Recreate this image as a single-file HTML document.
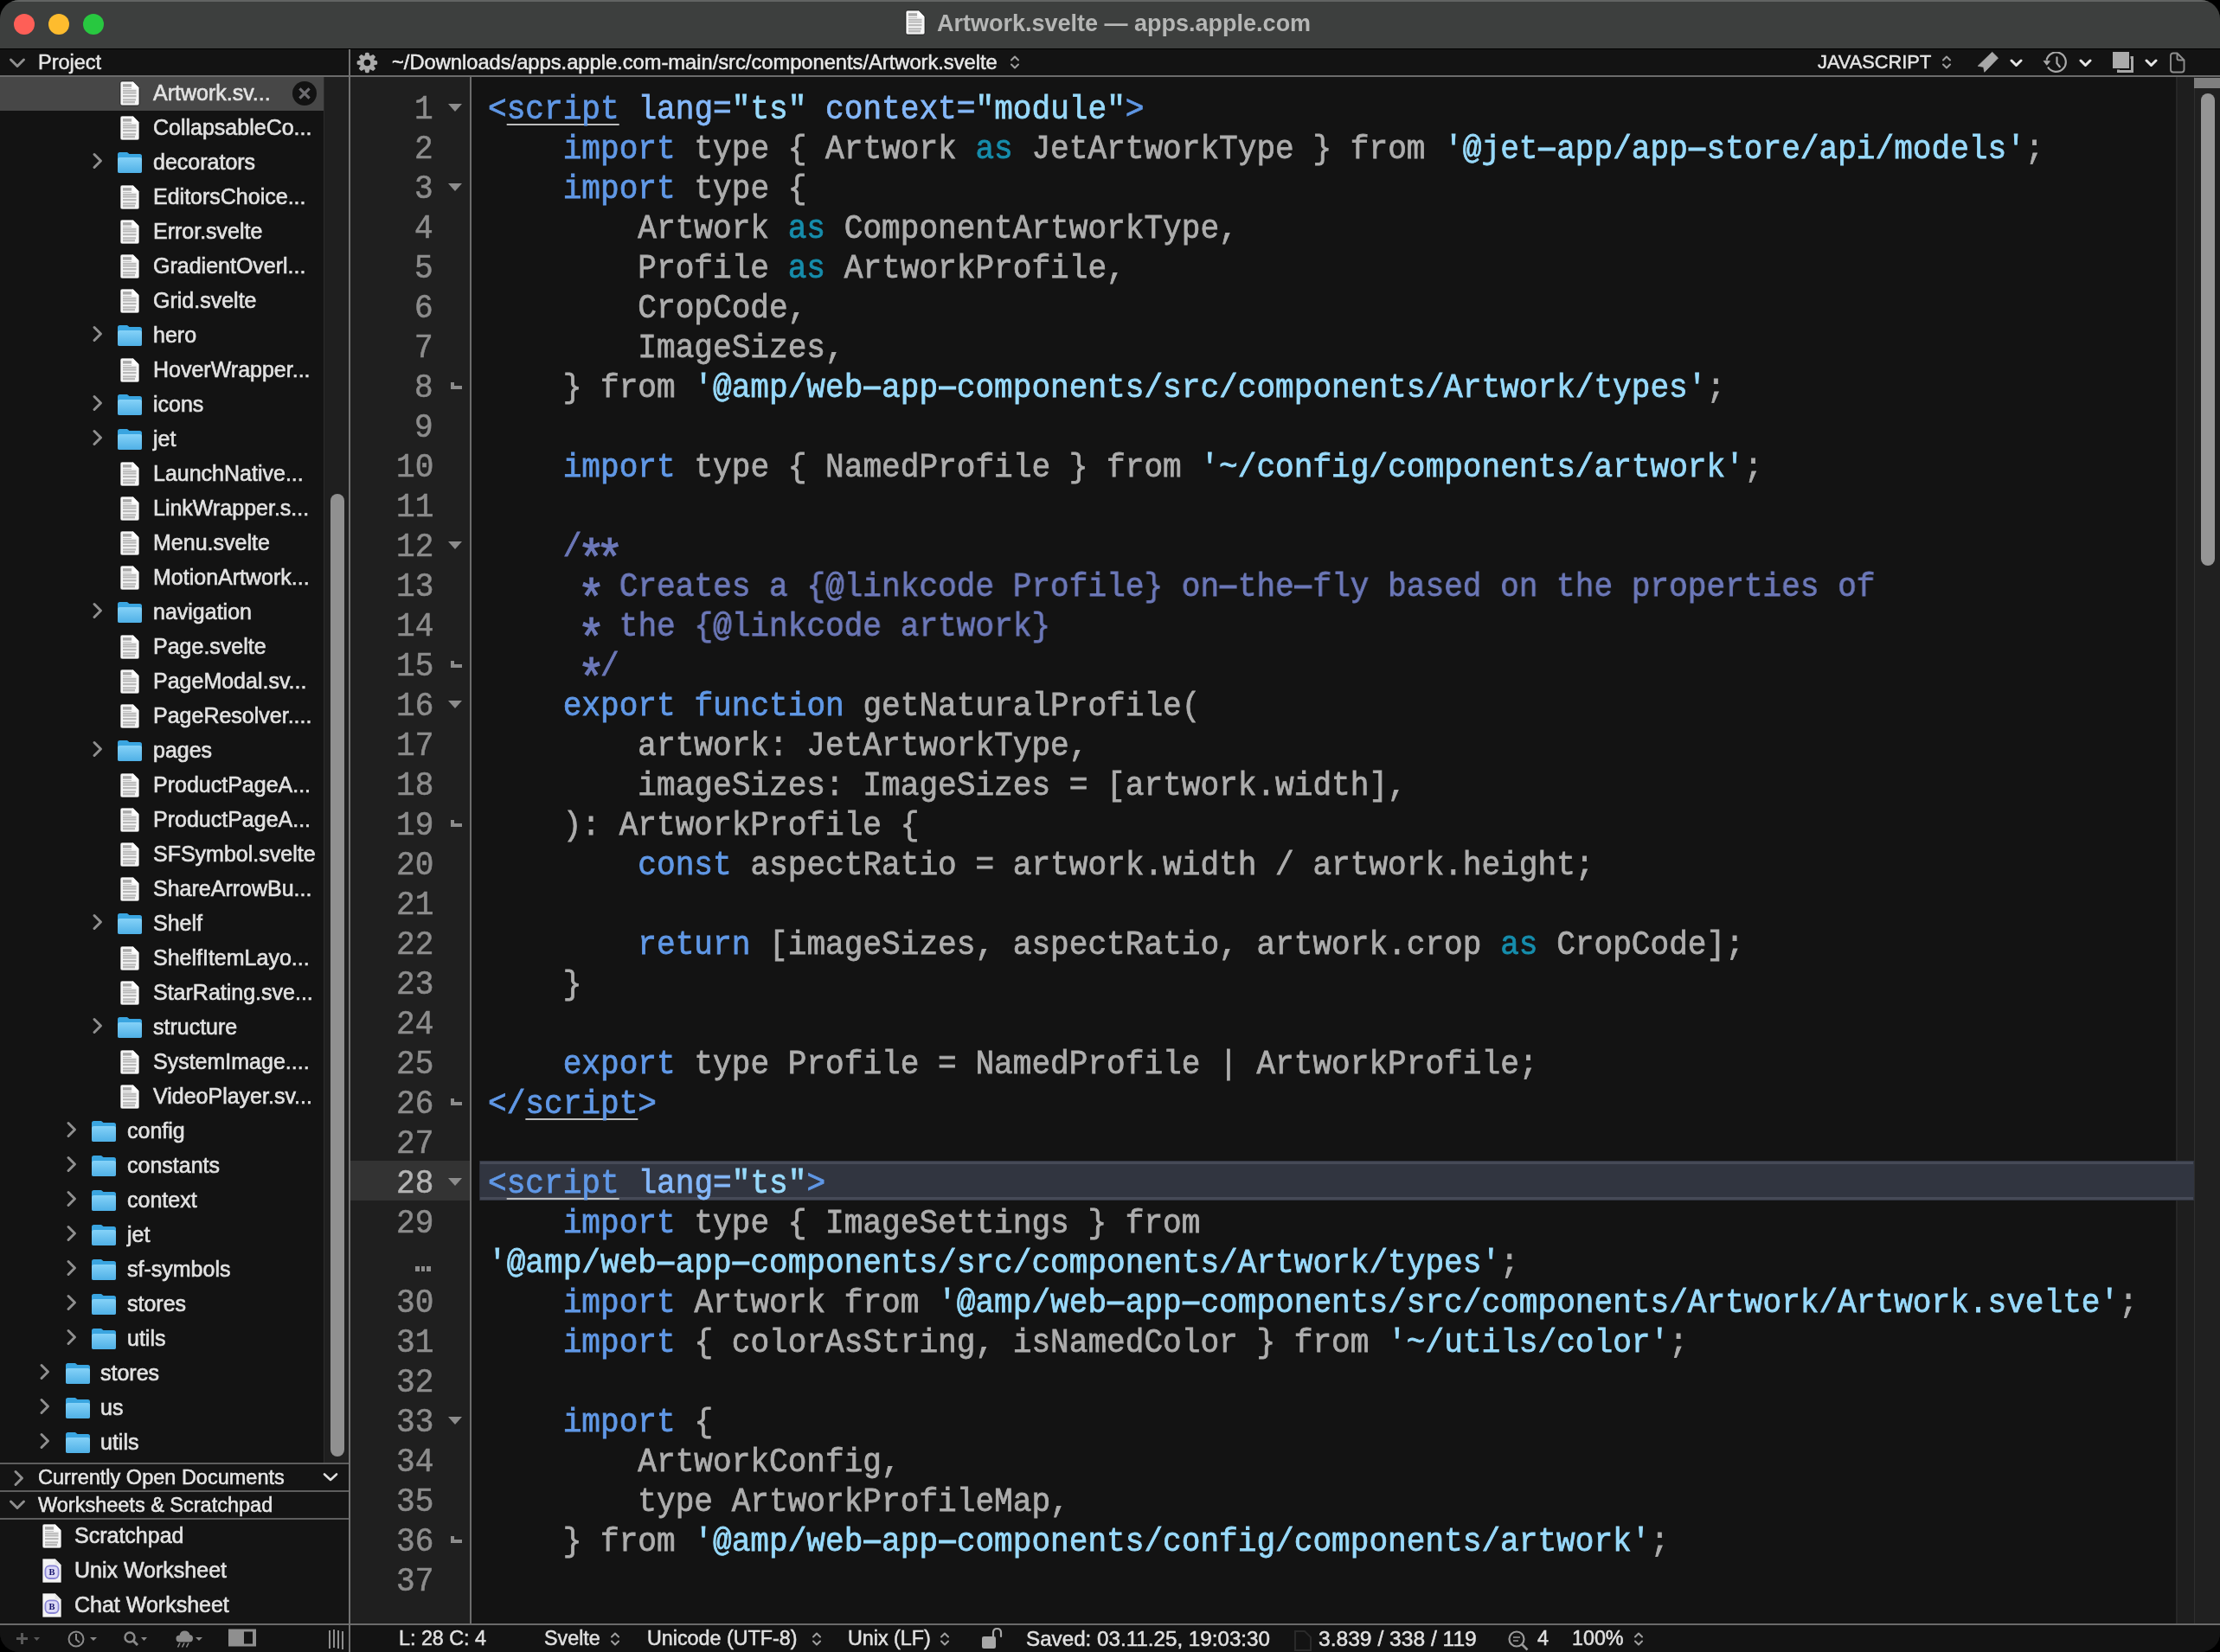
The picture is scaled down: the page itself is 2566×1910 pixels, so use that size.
<!DOCTYPE html><html><head><meta charset="utf-8"><style>
*{margin:0;padding:0;box-sizing:border-box}
html,body{width:2566px;height:1910px;background:#000;overflow:hidden}
body{position:relative;font-family:"Liberation Sans",sans-serif}
.abs{position:absolute}
#win{will-change:transform;position:absolute;left:0;top:0;width:2566px;height:1910px;border-radius:22px;overflow:hidden;background:#141414}
.cl{-webkit-text-stroke-width:0.8px;position:absolute;left:564.0px;height:46px;line-height:46px;font-family:"Liberation Mono",monospace;font-size:39.5px;white-space:pre;transform:scaleX(0.91414);transform-origin:0 0;letter-spacing:0}
.ln{-webkit-text-stroke-width:0.6px;position:absolute;right:2064.9px;height:46px;line-height:46px;font-family:"Liberation Mono",monospace;font-size:39.5px;white-space:pre;color:#8c8c8c;transform:scaleX(0.91414);transform-origin:100% 0}
.ast{display:inline-block;width:0.6em;text-align:center;transform:translateY(17px) scale(1.5)}
.hy{display:inline-block;width:0.6em;text-align:center;transform:scaleX(1.9)}
.u{text-decoration:underline;text-decoration-skip-ink:none;text-decoration-color:#bdbdbd;text-decoration-thickness:2px;text-underline-offset:6px}
.sbt{-webkit-text-stroke:0.6px #e2e2e2;position:absolute;height:40px;line-height:40px;font-size:25px;color:#e2e2e2;white-space:pre}
.st{-webkit-text-stroke:0.5px #e0e0e0;position:absolute;top:1879px;height:31px;line-height:31px;font-size:23.3px;color:#e0e0e0;white-space:pre}
.hd{-webkit-text-stroke:0.5px currentColor;position:absolute;height:30px;line-height:30px;font-size:23.5px;color:#e6e6e6;white-space:pre}
</style></head><body><div id="win">
<div class="abs" style="left:0;top:0;width:2566px;height:56px;background:#3d3f3e;border-top:2px solid #626463"></div>
<div class="abs" style="left:0;top:56px;width:2566px;height:1px;background:#000"></div>
<div class="abs" style="left:16px;top:16px;width:24px;height:24px;border-radius:50%;background:#fe5f57"></div>
<div class="abs" style="left:56px;top:16px;width:24px;height:24px;border-radius:50%;background:#febc2e"></div>
<div class="abs" style="left:96px;top:16px;width:24px;height:24px;border-radius:50%;background:#28c840"></div>
<div class="abs" style="left:1046px;top:11px"><svg width="24" height="30" viewBox="0 0 24 30"><path d="M3 1 H15.6 L23 8.4 V27 Q23 29 21 29 H3 Q1 29 1 27 V3 Q1 1 3 1Z" fill="#f6f6f6" stroke="#0c0c0c" stroke-width="0.7"/><path d="M15.6 1.3 L22.7 8.4 H17 Q15.6 8.4 15.6 7Z" fill="#ffffff"/><g fill="#a9a9a9"><rect x="4" y="4.2" width="10" height="3.4"/></g><g fill="#bababa"><rect x="4" y="9" width="10" height="0.9"/><rect x="4" y="10.8" width="15.5" height="2"/><rect x="4" y="13.4" width="15.5" height="2.2"/><rect x="4" y="17" width="15.5" height="2.3"/><rect x="4" y="21.2" width="15" height="2.2"/><rect x="4" y="24" width="14" height="2.4"/></g></svg></div>
<div class="abs" style="left:1083px;top:0;height:56px;line-height:54px;font-size:27px;font-weight:bold;color:#b5b6b5;white-space:pre">Artwork.svelte — apps.apple.com</div>
<div class="abs" style="left:0;top:57px;width:2566px;height:30px;background:#131313"></div>
<div class="abs" style="left:0;top:87px;width:2566px;height:2px;background:#6b6b6b"></div>
<div class="abs" style="left:10px;top:66px"><svg width="20" height="14" viewBox="0 0 20 14"><path d="M2.5 3 L10 10.5 L17.5 3" fill="none" stroke="#8f8f8f" stroke-width="3" stroke-linecap="round" stroke-linejoin="round"/></svg></div>
<div class="hd" style="left:44px;top:57px">Project</div>
<div class="abs" style="left:411px;top:59px"><svg width="27" height="27" viewBox="0 0 27 27"><g fill="#ababab"><circle cx="13.4" cy="13.5" r="8.4"/><path d="M10.4 6 L11.4 1.9 Q13.4 1.5 15.4 1.9 L16.4 6Z" transform="rotate(0 13.4 13.5)"/><path d="M10.4 6 L11.4 1.9 Q13.4 1.5 15.4 1.9 L16.4 6Z" transform="rotate(45 13.4 13.5)"/><path d="M10.4 6 L11.4 1.9 Q13.4 1.5 15.4 1.9 L16.4 6Z" transform="rotate(90 13.4 13.5)"/><path d="M10.4 6 L11.4 1.9 Q13.4 1.5 15.4 1.9 L16.4 6Z" transform="rotate(135 13.4 13.5)"/><path d="M10.4 6 L11.4 1.9 Q13.4 1.5 15.4 1.9 L16.4 6Z" transform="rotate(180 13.4 13.5)"/><path d="M10.4 6 L11.4 1.9 Q13.4 1.5 15.4 1.9 L16.4 6Z" transform="rotate(225 13.4 13.5)"/><path d="M10.4 6 L11.4 1.9 Q13.4 1.5 15.4 1.9 L16.4 6Z" transform="rotate(270 13.4 13.5)"/><path d="M10.4 6 L11.4 1.9 Q13.4 1.5 15.4 1.9 L16.4 6Z" transform="rotate(315 13.4 13.5)"/></g><circle cx="13.4" cy="13.5" r="3.8" fill="#131313"/></svg></div>
<div class="hd" style="left:453px;top:57px;font-size:23.7px;color:#e8e8e8">~/Downloads/apps.apple.com-main/src/components/Artwork.svelte</div>
<div class="abs" style="left:1167px;top:63px"><svg width="12" height="18" viewBox="0 0 12 18"><path d="M2 6.5 L6 2.5 L10 6.5 M2 11.5 L6 15.5 L10 11.5" fill="none" stroke="#a0a0a0" stroke-width="2" stroke-linecap="round" stroke-linejoin="round"/></svg></div>
<div class="hd" style="left:2101px;top:57px;font-size:21.8px;color:#e4e4e4">JAVASCRIPT</div>
<div class="abs" style="left:2244px;top:63px"><svg width="12" height="18" viewBox="0 0 12 18"><path d="M2 6.5 L6 2.5 L10 6.5 M2 11.5 L6 15.5 L10 11.5" fill="none" stroke="#a0a0a0" stroke-width="2" stroke-linecap="round" stroke-linejoin="round"/></svg></div>
<div class="abs" style="left:2284px;top:59px"><svg width="28" height="28" viewBox="0 0 28 28"><path d="M18.7 1.3 L25.5 8.1 L9.8 24.3 L8.7 18.4 L2.2 17.3 Z" fill="#a8a8a8" stroke="#a8a8a8" stroke-width="0.8" stroke-linejoin="round"/></svg></div>
<div class="abs" style="left:2322.5px;top:67.5px"><svg width="18" height="14" viewBox="0 0 18 14"><path d="M2 2 L7.5 7.5 L13 2" fill="none" stroke="#e6e6e6" stroke-width="3" stroke-linecap="round" stroke-linejoin="round"/></svg></div>
<div class="abs" style="left:2361px;top:60px"><svg width="30" height="26" viewBox="0 0 30 26"><path d="M6 17.5 A11.2 11.2 0 1 0 4.6 9.6" fill="none" stroke="#a9a9a9" stroke-width="2.2"/><path d="M1.1 10.4 L8.5 10.7 L4.8 15.3Z" fill="#a9a9a9" stroke="#a9a9a9" stroke-width="0.8" stroke-linejoin="round"/><path d="M16.5 6.4 V13.2 L19.8 17.2" fill="none" stroke="#a9a9a9" stroke-width="2.2" stroke-linecap="round"/></svg></div>
<div class="abs" style="left:2402.5px;top:67.5px"><svg width="18" height="14" viewBox="0 0 18 14"><path d="M2 2 L7.5 7.5 L13 2" fill="none" stroke="#e6e6e6" stroke-width="3" stroke-linecap="round" stroke-linejoin="round"/></svg></div>
<div class="abs" style="left:2441px;top:59px"><svg width="28" height="28" viewBox="0 0 28 28"><rect x="7.5" y="7.5" width="16" height="16" fill="none" stroke="#a8a8a8" stroke-width="3"/><rect x="0" y="0" width="21.5" height="21.5" fill="#131313"/><rect x="1" y="1" width="19" height="19" fill="#ababab"/></svg></div>
<div class="abs" style="left:2478.5px;top:67.5px"><svg width="18" height="14" viewBox="0 0 18 14"><path d="M2 2 L7.5 7.5 L13 2" fill="none" stroke="#e6e6e6" stroke-width="3" stroke-linecap="round" stroke-linejoin="round"/></svg></div>
<div class="abs" style="left:2507px;top:60px"><svg width="20" height="26" viewBox="0 0 20 26"><path d="M4.5 1.5 H9.5 L17.5 9.5 V20.5 Q17.5 23.5 14.5 23.5 H5 Q2 23.5 2 20.5 V4.5 Q2 1.5 5 1.5Z M9.5 1.5 V7.5 Q9.5 9.5 11.5 9.5 H17.5" fill="none" stroke="#8e8e8e" stroke-width="1.9" stroke-linejoin="round"/></svg></div>
<div class="abs" style="left:0;top:89px;width:403px;height:1602px;background:#131313"></div>
<div class="abs" style="left:0;top:88px;width:374px;height:40px;background:#474747"></div>
<div class="abs" style="left:374px;top:89px;width:29px;height:1602px;background:#1f1f1f;border-left:1px solid #2c2c2c"></div>
<div class="abs" style="left:382px;top:571px;width:16px;height:1113px;border-radius:8px;background:#909090"></div>
<div class="abs" style="left:0;top:87px;width:403px;height:1.5px;background:#6b6b6b"></div>
<div class="abs" style="left:138px;top:93px"><svg width="24" height="30" viewBox="0 0 24 30"><path d="M3 1 H15.6 L23 8.4 V27 Q23 29 21 29 H3 Q1 29 1 27 V3 Q1 1 3 1Z" fill="#f6f6f6" stroke="#0c0c0c" stroke-width="0.7"/><path d="M15.6 1.3 L22.7 8.4 H17 Q15.6 8.4 15.6 7Z" fill="#ffffff"/><g fill="#a9a9a9"><rect x="4" y="4.2" width="10" height="3.4"/></g><g fill="#bababa"><rect x="4" y="9" width="10" height="0.9"/><rect x="4" y="10.8" width="15.5" height="2"/><rect x="4" y="13.4" width="15.5" height="2.2"/><rect x="4" y="17" width="15.5" height="2.3"/><rect x="4" y="21.2" width="15" height="2.2"/><rect x="4" y="24" width="14" height="2.4"/></g></svg></div>
<div class="sbt" style="left:177px;top:87px">Artwork.sv...</div>
<div class="abs" style="left:138px;top:133px"><svg width="24" height="30" viewBox="0 0 24 30"><path d="M3 1 H15.6 L23 8.4 V27 Q23 29 21 29 H3 Q1 29 1 27 V3 Q1 1 3 1Z" fill="#f6f6f6" stroke="#0c0c0c" stroke-width="0.7"/><path d="M15.6 1.3 L22.7 8.4 H17 Q15.6 8.4 15.6 7Z" fill="#ffffff"/><g fill="#a9a9a9"><rect x="4" y="4.2" width="10" height="3.4"/></g><g fill="#bababa"><rect x="4" y="9" width="10" height="0.9"/><rect x="4" y="10.8" width="15.5" height="2"/><rect x="4" y="13.4" width="15.5" height="2.2"/><rect x="4" y="17" width="15.5" height="2.3"/><rect x="4" y="21.2" width="15" height="2.2"/><rect x="4" y="24" width="14" height="2.4"/></g></svg></div>
<div class="sbt" style="left:177px;top:127px">CollapsableCo...</div>
<div class="abs" style="left:106px;top:176px"><svg width="14" height="20" viewBox="0 0 14 20"><path d="M3 2.5 L10.5 10 L3 17.5" fill="none" stroke="#8f8f8f" stroke-width="3" stroke-linecap="round" stroke-linejoin="round"/></svg></div>
<div class="abs" style="left:135px;top:175px"><svg width="30" height="26" viewBox="0 0 30 26"><defs><linearGradient id="fg1" x1="0" y1="0" x2="0" y2="1"><stop offset="0" stop-color="#85d2f8"/><stop offset="1" stop-color="#4fb0e6"/></linearGradient></defs><path d="M1 3.5 Q1 1 3.5 1 H12 L14.5 3 H26.5 Q29 3 29 5.5 V22.5 Q29 25 26.5 25 H3.5 Q1 25 1 22.5Z" fill="#3aa5e0"/><path d="M1 9.5 Q1 7 3.5 7 H26.5 Q29 7 29 9.5 V22.5 Q29 25 26.5 25 H3.5 Q1 25 1 22.5Z" fill="url(#fg1)"/></svg></div>
<div class="sbt" style="left:177px;top:167px">decorators</div>
<div class="abs" style="left:138px;top:213px"><svg width="24" height="30" viewBox="0 0 24 30"><path d="M3 1 H15.6 L23 8.4 V27 Q23 29 21 29 H3 Q1 29 1 27 V3 Q1 1 3 1Z" fill="#f6f6f6" stroke="#0c0c0c" stroke-width="0.7"/><path d="M15.6 1.3 L22.7 8.4 H17 Q15.6 8.4 15.6 7Z" fill="#ffffff"/><g fill="#a9a9a9"><rect x="4" y="4.2" width="10" height="3.4"/></g><g fill="#bababa"><rect x="4" y="9" width="10" height="0.9"/><rect x="4" y="10.8" width="15.5" height="2"/><rect x="4" y="13.4" width="15.5" height="2.2"/><rect x="4" y="17" width="15.5" height="2.3"/><rect x="4" y="21.2" width="15" height="2.2"/><rect x="4" y="24" width="14" height="2.4"/></g></svg></div>
<div class="sbt" style="left:177px;top:207px">EditorsChoice...</div>
<div class="abs" style="left:138px;top:253px"><svg width="24" height="30" viewBox="0 0 24 30"><path d="M3 1 H15.6 L23 8.4 V27 Q23 29 21 29 H3 Q1 29 1 27 V3 Q1 1 3 1Z" fill="#f6f6f6" stroke="#0c0c0c" stroke-width="0.7"/><path d="M15.6 1.3 L22.7 8.4 H17 Q15.6 8.4 15.6 7Z" fill="#ffffff"/><g fill="#a9a9a9"><rect x="4" y="4.2" width="10" height="3.4"/></g><g fill="#bababa"><rect x="4" y="9" width="10" height="0.9"/><rect x="4" y="10.8" width="15.5" height="2"/><rect x="4" y="13.4" width="15.5" height="2.2"/><rect x="4" y="17" width="15.5" height="2.3"/><rect x="4" y="21.2" width="15" height="2.2"/><rect x="4" y="24" width="14" height="2.4"/></g></svg></div>
<div class="sbt" style="left:177px;top:247px">Error.svelte</div>
<div class="abs" style="left:138px;top:293px"><svg width="24" height="30" viewBox="0 0 24 30"><path d="M3 1 H15.6 L23 8.4 V27 Q23 29 21 29 H3 Q1 29 1 27 V3 Q1 1 3 1Z" fill="#f6f6f6" stroke="#0c0c0c" stroke-width="0.7"/><path d="M15.6 1.3 L22.7 8.4 H17 Q15.6 8.4 15.6 7Z" fill="#ffffff"/><g fill="#a9a9a9"><rect x="4" y="4.2" width="10" height="3.4"/></g><g fill="#bababa"><rect x="4" y="9" width="10" height="0.9"/><rect x="4" y="10.8" width="15.5" height="2"/><rect x="4" y="13.4" width="15.5" height="2.2"/><rect x="4" y="17" width="15.5" height="2.3"/><rect x="4" y="21.2" width="15" height="2.2"/><rect x="4" y="24" width="14" height="2.4"/></g></svg></div>
<div class="sbt" style="left:177px;top:287px">GradientOverl...</div>
<div class="abs" style="left:138px;top:333px"><svg width="24" height="30" viewBox="0 0 24 30"><path d="M3 1 H15.6 L23 8.4 V27 Q23 29 21 29 H3 Q1 29 1 27 V3 Q1 1 3 1Z" fill="#f6f6f6" stroke="#0c0c0c" stroke-width="0.7"/><path d="M15.6 1.3 L22.7 8.4 H17 Q15.6 8.4 15.6 7Z" fill="#ffffff"/><g fill="#a9a9a9"><rect x="4" y="4.2" width="10" height="3.4"/></g><g fill="#bababa"><rect x="4" y="9" width="10" height="0.9"/><rect x="4" y="10.8" width="15.5" height="2"/><rect x="4" y="13.4" width="15.5" height="2.2"/><rect x="4" y="17" width="15.5" height="2.3"/><rect x="4" y="21.2" width="15" height="2.2"/><rect x="4" y="24" width="14" height="2.4"/></g></svg></div>
<div class="sbt" style="left:177px;top:327px">Grid.svelte</div>
<div class="abs" style="left:106px;top:376px"><svg width="14" height="20" viewBox="0 0 14 20"><path d="M3 2.5 L10.5 10 L3 17.5" fill="none" stroke="#8f8f8f" stroke-width="3" stroke-linecap="round" stroke-linejoin="round"/></svg></div>
<div class="abs" style="left:135px;top:375px"><svg width="30" height="26" viewBox="0 0 30 26"><defs><linearGradient id="fg2" x1="0" y1="0" x2="0" y2="1"><stop offset="0" stop-color="#85d2f8"/><stop offset="1" stop-color="#4fb0e6"/></linearGradient></defs><path d="M1 3.5 Q1 1 3.5 1 H12 L14.5 3 H26.5 Q29 3 29 5.5 V22.5 Q29 25 26.5 25 H3.5 Q1 25 1 22.5Z" fill="#3aa5e0"/><path d="M1 9.5 Q1 7 3.5 7 H26.5 Q29 7 29 9.5 V22.5 Q29 25 26.5 25 H3.5 Q1 25 1 22.5Z" fill="url(#fg2)"/></svg></div>
<div class="sbt" style="left:177px;top:367px">hero</div>
<div class="abs" style="left:138px;top:413px"><svg width="24" height="30" viewBox="0 0 24 30"><path d="M3 1 H15.6 L23 8.4 V27 Q23 29 21 29 H3 Q1 29 1 27 V3 Q1 1 3 1Z" fill="#f6f6f6" stroke="#0c0c0c" stroke-width="0.7"/><path d="M15.6 1.3 L22.7 8.4 H17 Q15.6 8.4 15.6 7Z" fill="#ffffff"/><g fill="#a9a9a9"><rect x="4" y="4.2" width="10" height="3.4"/></g><g fill="#bababa"><rect x="4" y="9" width="10" height="0.9"/><rect x="4" y="10.8" width="15.5" height="2"/><rect x="4" y="13.4" width="15.5" height="2.2"/><rect x="4" y="17" width="15.5" height="2.3"/><rect x="4" y="21.2" width="15" height="2.2"/><rect x="4" y="24" width="14" height="2.4"/></g></svg></div>
<div class="sbt" style="left:177px;top:407px">HoverWrapper...</div>
<div class="abs" style="left:106px;top:456px"><svg width="14" height="20" viewBox="0 0 14 20"><path d="M3 2.5 L10.5 10 L3 17.5" fill="none" stroke="#8f8f8f" stroke-width="3" stroke-linecap="round" stroke-linejoin="round"/></svg></div>
<div class="abs" style="left:135px;top:455px"><svg width="30" height="26" viewBox="0 0 30 26"><defs><linearGradient id="fg3" x1="0" y1="0" x2="0" y2="1"><stop offset="0" stop-color="#85d2f8"/><stop offset="1" stop-color="#4fb0e6"/></linearGradient></defs><path d="M1 3.5 Q1 1 3.5 1 H12 L14.5 3 H26.5 Q29 3 29 5.5 V22.5 Q29 25 26.5 25 H3.5 Q1 25 1 22.5Z" fill="#3aa5e0"/><path d="M1 9.5 Q1 7 3.5 7 H26.5 Q29 7 29 9.5 V22.5 Q29 25 26.5 25 H3.5 Q1 25 1 22.5Z" fill="url(#fg3)"/></svg></div>
<div class="sbt" style="left:177px;top:447px">icons</div>
<div class="abs" style="left:106px;top:496px"><svg width="14" height="20" viewBox="0 0 14 20"><path d="M3 2.5 L10.5 10 L3 17.5" fill="none" stroke="#8f8f8f" stroke-width="3" stroke-linecap="round" stroke-linejoin="round"/></svg></div>
<div class="abs" style="left:135px;top:495px"><svg width="30" height="26" viewBox="0 0 30 26"><defs><linearGradient id="fg4" x1="0" y1="0" x2="0" y2="1"><stop offset="0" stop-color="#85d2f8"/><stop offset="1" stop-color="#4fb0e6"/></linearGradient></defs><path d="M1 3.5 Q1 1 3.5 1 H12 L14.5 3 H26.5 Q29 3 29 5.5 V22.5 Q29 25 26.5 25 H3.5 Q1 25 1 22.5Z" fill="#3aa5e0"/><path d="M1 9.5 Q1 7 3.5 7 H26.5 Q29 7 29 9.5 V22.5 Q29 25 26.5 25 H3.5 Q1 25 1 22.5Z" fill="url(#fg4)"/></svg></div>
<div class="sbt" style="left:177px;top:487px">jet</div>
<div class="abs" style="left:138px;top:533px"><svg width="24" height="30" viewBox="0 0 24 30"><path d="M3 1 H15.6 L23 8.4 V27 Q23 29 21 29 H3 Q1 29 1 27 V3 Q1 1 3 1Z" fill="#f6f6f6" stroke="#0c0c0c" stroke-width="0.7"/><path d="M15.6 1.3 L22.7 8.4 H17 Q15.6 8.4 15.6 7Z" fill="#ffffff"/><g fill="#a9a9a9"><rect x="4" y="4.2" width="10" height="3.4"/></g><g fill="#bababa"><rect x="4" y="9" width="10" height="0.9"/><rect x="4" y="10.8" width="15.5" height="2"/><rect x="4" y="13.4" width="15.5" height="2.2"/><rect x="4" y="17" width="15.5" height="2.3"/><rect x="4" y="21.2" width="15" height="2.2"/><rect x="4" y="24" width="14" height="2.4"/></g></svg></div>
<div class="sbt" style="left:177px;top:527px">LaunchNative...</div>
<div class="abs" style="left:138px;top:573px"><svg width="24" height="30" viewBox="0 0 24 30"><path d="M3 1 H15.6 L23 8.4 V27 Q23 29 21 29 H3 Q1 29 1 27 V3 Q1 1 3 1Z" fill="#f6f6f6" stroke="#0c0c0c" stroke-width="0.7"/><path d="M15.6 1.3 L22.7 8.4 H17 Q15.6 8.4 15.6 7Z" fill="#ffffff"/><g fill="#a9a9a9"><rect x="4" y="4.2" width="10" height="3.4"/></g><g fill="#bababa"><rect x="4" y="9" width="10" height="0.9"/><rect x="4" y="10.8" width="15.5" height="2"/><rect x="4" y="13.4" width="15.5" height="2.2"/><rect x="4" y="17" width="15.5" height="2.3"/><rect x="4" y="21.2" width="15" height="2.2"/><rect x="4" y="24" width="14" height="2.4"/></g></svg></div>
<div class="sbt" style="left:177px;top:567px">LinkWrapper.s...</div>
<div class="abs" style="left:138px;top:613px"><svg width="24" height="30" viewBox="0 0 24 30"><path d="M3 1 H15.6 L23 8.4 V27 Q23 29 21 29 H3 Q1 29 1 27 V3 Q1 1 3 1Z" fill="#f6f6f6" stroke="#0c0c0c" stroke-width="0.7"/><path d="M15.6 1.3 L22.7 8.4 H17 Q15.6 8.4 15.6 7Z" fill="#ffffff"/><g fill="#a9a9a9"><rect x="4" y="4.2" width="10" height="3.4"/></g><g fill="#bababa"><rect x="4" y="9" width="10" height="0.9"/><rect x="4" y="10.8" width="15.5" height="2"/><rect x="4" y="13.4" width="15.5" height="2.2"/><rect x="4" y="17" width="15.5" height="2.3"/><rect x="4" y="21.2" width="15" height="2.2"/><rect x="4" y="24" width="14" height="2.4"/></g></svg></div>
<div class="sbt" style="left:177px;top:607px">Menu.svelte</div>
<div class="abs" style="left:138px;top:653px"><svg width="24" height="30" viewBox="0 0 24 30"><path d="M3 1 H15.6 L23 8.4 V27 Q23 29 21 29 H3 Q1 29 1 27 V3 Q1 1 3 1Z" fill="#f6f6f6" stroke="#0c0c0c" stroke-width="0.7"/><path d="M15.6 1.3 L22.7 8.4 H17 Q15.6 8.4 15.6 7Z" fill="#ffffff"/><g fill="#a9a9a9"><rect x="4" y="4.2" width="10" height="3.4"/></g><g fill="#bababa"><rect x="4" y="9" width="10" height="0.9"/><rect x="4" y="10.8" width="15.5" height="2"/><rect x="4" y="13.4" width="15.5" height="2.2"/><rect x="4" y="17" width="15.5" height="2.3"/><rect x="4" y="21.2" width="15" height="2.2"/><rect x="4" y="24" width="14" height="2.4"/></g></svg></div>
<div class="sbt" style="left:177px;top:647px">MotionArtwork...</div>
<div class="abs" style="left:106px;top:696px"><svg width="14" height="20" viewBox="0 0 14 20"><path d="M3 2.5 L10.5 10 L3 17.5" fill="none" stroke="#8f8f8f" stroke-width="3" stroke-linecap="round" stroke-linejoin="round"/></svg></div>
<div class="abs" style="left:135px;top:695px"><svg width="30" height="26" viewBox="0 0 30 26"><defs><linearGradient id="fg5" x1="0" y1="0" x2="0" y2="1"><stop offset="0" stop-color="#85d2f8"/><stop offset="1" stop-color="#4fb0e6"/></linearGradient></defs><path d="M1 3.5 Q1 1 3.5 1 H12 L14.5 3 H26.5 Q29 3 29 5.5 V22.5 Q29 25 26.5 25 H3.5 Q1 25 1 22.5Z" fill="#3aa5e0"/><path d="M1 9.5 Q1 7 3.5 7 H26.5 Q29 7 29 9.5 V22.5 Q29 25 26.5 25 H3.5 Q1 25 1 22.5Z" fill="url(#fg5)"/></svg></div>
<div class="sbt" style="left:177px;top:687px">navigation</div>
<div class="abs" style="left:138px;top:733px"><svg width="24" height="30" viewBox="0 0 24 30"><path d="M3 1 H15.6 L23 8.4 V27 Q23 29 21 29 H3 Q1 29 1 27 V3 Q1 1 3 1Z" fill="#f6f6f6" stroke="#0c0c0c" stroke-width="0.7"/><path d="M15.6 1.3 L22.7 8.4 H17 Q15.6 8.4 15.6 7Z" fill="#ffffff"/><g fill="#a9a9a9"><rect x="4" y="4.2" width="10" height="3.4"/></g><g fill="#bababa"><rect x="4" y="9" width="10" height="0.9"/><rect x="4" y="10.8" width="15.5" height="2"/><rect x="4" y="13.4" width="15.5" height="2.2"/><rect x="4" y="17" width="15.5" height="2.3"/><rect x="4" y="21.2" width="15" height="2.2"/><rect x="4" y="24" width="14" height="2.4"/></g></svg></div>
<div class="sbt" style="left:177px;top:727px">Page.svelte</div>
<div class="abs" style="left:138px;top:773px"><svg width="24" height="30" viewBox="0 0 24 30"><path d="M3 1 H15.6 L23 8.4 V27 Q23 29 21 29 H3 Q1 29 1 27 V3 Q1 1 3 1Z" fill="#f6f6f6" stroke="#0c0c0c" stroke-width="0.7"/><path d="M15.6 1.3 L22.7 8.4 H17 Q15.6 8.4 15.6 7Z" fill="#ffffff"/><g fill="#a9a9a9"><rect x="4" y="4.2" width="10" height="3.4"/></g><g fill="#bababa"><rect x="4" y="9" width="10" height="0.9"/><rect x="4" y="10.8" width="15.5" height="2"/><rect x="4" y="13.4" width="15.5" height="2.2"/><rect x="4" y="17" width="15.5" height="2.3"/><rect x="4" y="21.2" width="15" height="2.2"/><rect x="4" y="24" width="14" height="2.4"/></g></svg></div>
<div class="sbt" style="left:177px;top:767px">PageModal.sv...</div>
<div class="abs" style="left:138px;top:813px"><svg width="24" height="30" viewBox="0 0 24 30"><path d="M3 1 H15.6 L23 8.4 V27 Q23 29 21 29 H3 Q1 29 1 27 V3 Q1 1 3 1Z" fill="#f6f6f6" stroke="#0c0c0c" stroke-width="0.7"/><path d="M15.6 1.3 L22.7 8.4 H17 Q15.6 8.4 15.6 7Z" fill="#ffffff"/><g fill="#a9a9a9"><rect x="4" y="4.2" width="10" height="3.4"/></g><g fill="#bababa"><rect x="4" y="9" width="10" height="0.9"/><rect x="4" y="10.8" width="15.5" height="2"/><rect x="4" y="13.4" width="15.5" height="2.2"/><rect x="4" y="17" width="15.5" height="2.3"/><rect x="4" y="21.2" width="15" height="2.2"/><rect x="4" y="24" width="14" height="2.4"/></g></svg></div>
<div class="sbt" style="left:177px;top:807px">PageResolver....</div>
<div class="abs" style="left:106px;top:856px"><svg width="14" height="20" viewBox="0 0 14 20"><path d="M3 2.5 L10.5 10 L3 17.5" fill="none" stroke="#8f8f8f" stroke-width="3" stroke-linecap="round" stroke-linejoin="round"/></svg></div>
<div class="abs" style="left:135px;top:855px"><svg width="30" height="26" viewBox="0 0 30 26"><defs><linearGradient id="fg6" x1="0" y1="0" x2="0" y2="1"><stop offset="0" stop-color="#85d2f8"/><stop offset="1" stop-color="#4fb0e6"/></linearGradient></defs><path d="M1 3.5 Q1 1 3.5 1 H12 L14.5 3 H26.5 Q29 3 29 5.5 V22.5 Q29 25 26.5 25 H3.5 Q1 25 1 22.5Z" fill="#3aa5e0"/><path d="M1 9.5 Q1 7 3.5 7 H26.5 Q29 7 29 9.5 V22.5 Q29 25 26.5 25 H3.5 Q1 25 1 22.5Z" fill="url(#fg6)"/></svg></div>
<div class="sbt" style="left:177px;top:847px">pages</div>
<div class="abs" style="left:138px;top:893px"><svg width="24" height="30" viewBox="0 0 24 30"><path d="M3 1 H15.6 L23 8.4 V27 Q23 29 21 29 H3 Q1 29 1 27 V3 Q1 1 3 1Z" fill="#f6f6f6" stroke="#0c0c0c" stroke-width="0.7"/><path d="M15.6 1.3 L22.7 8.4 H17 Q15.6 8.4 15.6 7Z" fill="#ffffff"/><g fill="#a9a9a9"><rect x="4" y="4.2" width="10" height="3.4"/></g><g fill="#bababa"><rect x="4" y="9" width="10" height="0.9"/><rect x="4" y="10.8" width="15.5" height="2"/><rect x="4" y="13.4" width="15.5" height="2.2"/><rect x="4" y="17" width="15.5" height="2.3"/><rect x="4" y="21.2" width="15" height="2.2"/><rect x="4" y="24" width="14" height="2.4"/></g></svg></div>
<div class="sbt" style="left:177px;top:887px">ProductPageA...</div>
<div class="abs" style="left:138px;top:933px"><svg width="24" height="30" viewBox="0 0 24 30"><path d="M3 1 H15.6 L23 8.4 V27 Q23 29 21 29 H3 Q1 29 1 27 V3 Q1 1 3 1Z" fill="#f6f6f6" stroke="#0c0c0c" stroke-width="0.7"/><path d="M15.6 1.3 L22.7 8.4 H17 Q15.6 8.4 15.6 7Z" fill="#ffffff"/><g fill="#a9a9a9"><rect x="4" y="4.2" width="10" height="3.4"/></g><g fill="#bababa"><rect x="4" y="9" width="10" height="0.9"/><rect x="4" y="10.8" width="15.5" height="2"/><rect x="4" y="13.4" width="15.5" height="2.2"/><rect x="4" y="17" width="15.5" height="2.3"/><rect x="4" y="21.2" width="15" height="2.2"/><rect x="4" y="24" width="14" height="2.4"/></g></svg></div>
<div class="sbt" style="left:177px;top:927px">ProductPageA...</div>
<div class="abs" style="left:138px;top:973px"><svg width="24" height="30" viewBox="0 0 24 30"><path d="M3 1 H15.6 L23 8.4 V27 Q23 29 21 29 H3 Q1 29 1 27 V3 Q1 1 3 1Z" fill="#f6f6f6" stroke="#0c0c0c" stroke-width="0.7"/><path d="M15.6 1.3 L22.7 8.4 H17 Q15.6 8.4 15.6 7Z" fill="#ffffff"/><g fill="#a9a9a9"><rect x="4" y="4.2" width="10" height="3.4"/></g><g fill="#bababa"><rect x="4" y="9" width="10" height="0.9"/><rect x="4" y="10.8" width="15.5" height="2"/><rect x="4" y="13.4" width="15.5" height="2.2"/><rect x="4" y="17" width="15.5" height="2.3"/><rect x="4" y="21.2" width="15" height="2.2"/><rect x="4" y="24" width="14" height="2.4"/></g></svg></div>
<div class="sbt" style="left:177px;top:967px">SFSymbol.svelte</div>
<div class="abs" style="left:138px;top:1013px"><svg width="24" height="30" viewBox="0 0 24 30"><path d="M3 1 H15.6 L23 8.4 V27 Q23 29 21 29 H3 Q1 29 1 27 V3 Q1 1 3 1Z" fill="#f6f6f6" stroke="#0c0c0c" stroke-width="0.7"/><path d="M15.6 1.3 L22.7 8.4 H17 Q15.6 8.4 15.6 7Z" fill="#ffffff"/><g fill="#a9a9a9"><rect x="4" y="4.2" width="10" height="3.4"/></g><g fill="#bababa"><rect x="4" y="9" width="10" height="0.9"/><rect x="4" y="10.8" width="15.5" height="2"/><rect x="4" y="13.4" width="15.5" height="2.2"/><rect x="4" y="17" width="15.5" height="2.3"/><rect x="4" y="21.2" width="15" height="2.2"/><rect x="4" y="24" width="14" height="2.4"/></g></svg></div>
<div class="sbt" style="left:177px;top:1007px">ShareArrowBu...</div>
<div class="abs" style="left:106px;top:1056px"><svg width="14" height="20" viewBox="0 0 14 20"><path d="M3 2.5 L10.5 10 L3 17.5" fill="none" stroke="#8f8f8f" stroke-width="3" stroke-linecap="round" stroke-linejoin="round"/></svg></div>
<div class="abs" style="left:135px;top:1055px"><svg width="30" height="26" viewBox="0 0 30 26"><defs><linearGradient id="fg7" x1="0" y1="0" x2="0" y2="1"><stop offset="0" stop-color="#85d2f8"/><stop offset="1" stop-color="#4fb0e6"/></linearGradient></defs><path d="M1 3.5 Q1 1 3.5 1 H12 L14.5 3 H26.5 Q29 3 29 5.5 V22.5 Q29 25 26.5 25 H3.5 Q1 25 1 22.5Z" fill="#3aa5e0"/><path d="M1 9.5 Q1 7 3.5 7 H26.5 Q29 7 29 9.5 V22.5 Q29 25 26.5 25 H3.5 Q1 25 1 22.5Z" fill="url(#fg7)"/></svg></div>
<div class="sbt" style="left:177px;top:1047px">Shelf</div>
<div class="abs" style="left:138px;top:1093px"><svg width="24" height="30" viewBox="0 0 24 30"><path d="M3 1 H15.6 L23 8.4 V27 Q23 29 21 29 H3 Q1 29 1 27 V3 Q1 1 3 1Z" fill="#f6f6f6" stroke="#0c0c0c" stroke-width="0.7"/><path d="M15.6 1.3 L22.7 8.4 H17 Q15.6 8.4 15.6 7Z" fill="#ffffff"/><g fill="#a9a9a9"><rect x="4" y="4.2" width="10" height="3.4"/></g><g fill="#bababa"><rect x="4" y="9" width="10" height="0.9"/><rect x="4" y="10.8" width="15.5" height="2"/><rect x="4" y="13.4" width="15.5" height="2.2"/><rect x="4" y="17" width="15.5" height="2.3"/><rect x="4" y="21.2" width="15" height="2.2"/><rect x="4" y="24" width="14" height="2.4"/></g></svg></div>
<div class="sbt" style="left:177px;top:1087px">ShelfItemLayo...</div>
<div class="abs" style="left:138px;top:1133px"><svg width="24" height="30" viewBox="0 0 24 30"><path d="M3 1 H15.6 L23 8.4 V27 Q23 29 21 29 H3 Q1 29 1 27 V3 Q1 1 3 1Z" fill="#f6f6f6" stroke="#0c0c0c" stroke-width="0.7"/><path d="M15.6 1.3 L22.7 8.4 H17 Q15.6 8.4 15.6 7Z" fill="#ffffff"/><g fill="#a9a9a9"><rect x="4" y="4.2" width="10" height="3.4"/></g><g fill="#bababa"><rect x="4" y="9" width="10" height="0.9"/><rect x="4" y="10.8" width="15.5" height="2"/><rect x="4" y="13.4" width="15.5" height="2.2"/><rect x="4" y="17" width="15.5" height="2.3"/><rect x="4" y="21.2" width="15" height="2.2"/><rect x="4" y="24" width="14" height="2.4"/></g></svg></div>
<div class="sbt" style="left:177px;top:1127px">StarRating.sve...</div>
<div class="abs" style="left:106px;top:1176px"><svg width="14" height="20" viewBox="0 0 14 20"><path d="M3 2.5 L10.5 10 L3 17.5" fill="none" stroke="#8f8f8f" stroke-width="3" stroke-linecap="round" stroke-linejoin="round"/></svg></div>
<div class="abs" style="left:135px;top:1175px"><svg width="30" height="26" viewBox="0 0 30 26"><defs><linearGradient id="fg8" x1="0" y1="0" x2="0" y2="1"><stop offset="0" stop-color="#85d2f8"/><stop offset="1" stop-color="#4fb0e6"/></linearGradient></defs><path d="M1 3.5 Q1 1 3.5 1 H12 L14.5 3 H26.5 Q29 3 29 5.5 V22.5 Q29 25 26.5 25 H3.5 Q1 25 1 22.5Z" fill="#3aa5e0"/><path d="M1 9.5 Q1 7 3.5 7 H26.5 Q29 7 29 9.5 V22.5 Q29 25 26.5 25 H3.5 Q1 25 1 22.5Z" fill="url(#fg8)"/></svg></div>
<div class="sbt" style="left:177px;top:1167px">structure</div>
<div class="abs" style="left:138px;top:1213px"><svg width="24" height="30" viewBox="0 0 24 30"><path d="M3 1 H15.6 L23 8.4 V27 Q23 29 21 29 H3 Q1 29 1 27 V3 Q1 1 3 1Z" fill="#f6f6f6" stroke="#0c0c0c" stroke-width="0.7"/><path d="M15.6 1.3 L22.7 8.4 H17 Q15.6 8.4 15.6 7Z" fill="#ffffff"/><g fill="#a9a9a9"><rect x="4" y="4.2" width="10" height="3.4"/></g><g fill="#bababa"><rect x="4" y="9" width="10" height="0.9"/><rect x="4" y="10.8" width="15.5" height="2"/><rect x="4" y="13.4" width="15.5" height="2.2"/><rect x="4" y="17" width="15.5" height="2.3"/><rect x="4" y="21.2" width="15" height="2.2"/><rect x="4" y="24" width="14" height="2.4"/></g></svg></div>
<div class="sbt" style="left:177px;top:1207px">SystemImage....</div>
<div class="abs" style="left:138px;top:1253px"><svg width="24" height="30" viewBox="0 0 24 30"><path d="M3 1 H15.6 L23 8.4 V27 Q23 29 21 29 H3 Q1 29 1 27 V3 Q1 1 3 1Z" fill="#f6f6f6" stroke="#0c0c0c" stroke-width="0.7"/><path d="M15.6 1.3 L22.7 8.4 H17 Q15.6 8.4 15.6 7Z" fill="#ffffff"/><g fill="#a9a9a9"><rect x="4" y="4.2" width="10" height="3.4"/></g><g fill="#bababa"><rect x="4" y="9" width="10" height="0.9"/><rect x="4" y="10.8" width="15.5" height="2"/><rect x="4" y="13.4" width="15.5" height="2.2"/><rect x="4" y="17" width="15.5" height="2.3"/><rect x="4" y="21.2" width="15" height="2.2"/><rect x="4" y="24" width="14" height="2.4"/></g></svg></div>
<div class="sbt" style="left:177px;top:1247px">VideoPlayer.sv...</div>
<div class="abs" style="left:76px;top:1296px"><svg width="14" height="20" viewBox="0 0 14 20"><path d="M3 2.5 L10.5 10 L3 17.5" fill="none" stroke="#8f8f8f" stroke-width="3" stroke-linecap="round" stroke-linejoin="round"/></svg></div>
<div class="abs" style="left:105px;top:1295px"><svg width="30" height="26" viewBox="0 0 30 26"><defs><linearGradient id="fg9" x1="0" y1="0" x2="0" y2="1"><stop offset="0" stop-color="#85d2f8"/><stop offset="1" stop-color="#4fb0e6"/></linearGradient></defs><path d="M1 3.5 Q1 1 3.5 1 H12 L14.5 3 H26.5 Q29 3 29 5.5 V22.5 Q29 25 26.5 25 H3.5 Q1 25 1 22.5Z" fill="#3aa5e0"/><path d="M1 9.5 Q1 7 3.5 7 H26.5 Q29 7 29 9.5 V22.5 Q29 25 26.5 25 H3.5 Q1 25 1 22.5Z" fill="url(#fg9)"/></svg></div>
<div class="sbt" style="left:147px;top:1287px">config</div>
<div class="abs" style="left:76px;top:1336px"><svg width="14" height="20" viewBox="0 0 14 20"><path d="M3 2.5 L10.5 10 L3 17.5" fill="none" stroke="#8f8f8f" stroke-width="3" stroke-linecap="round" stroke-linejoin="round"/></svg></div>
<div class="abs" style="left:105px;top:1335px"><svg width="30" height="26" viewBox="0 0 30 26"><defs><linearGradient id="fg10" x1="0" y1="0" x2="0" y2="1"><stop offset="0" stop-color="#85d2f8"/><stop offset="1" stop-color="#4fb0e6"/></linearGradient></defs><path d="M1 3.5 Q1 1 3.5 1 H12 L14.5 3 H26.5 Q29 3 29 5.5 V22.5 Q29 25 26.5 25 H3.5 Q1 25 1 22.5Z" fill="#3aa5e0"/><path d="M1 9.5 Q1 7 3.5 7 H26.5 Q29 7 29 9.5 V22.5 Q29 25 26.5 25 H3.5 Q1 25 1 22.5Z" fill="url(#fg10)"/></svg></div>
<div class="sbt" style="left:147px;top:1327px">constants</div>
<div class="abs" style="left:76px;top:1376px"><svg width="14" height="20" viewBox="0 0 14 20"><path d="M3 2.5 L10.5 10 L3 17.5" fill="none" stroke="#8f8f8f" stroke-width="3" stroke-linecap="round" stroke-linejoin="round"/></svg></div>
<div class="abs" style="left:105px;top:1375px"><svg width="30" height="26" viewBox="0 0 30 26"><defs><linearGradient id="fg11" x1="0" y1="0" x2="0" y2="1"><stop offset="0" stop-color="#85d2f8"/><stop offset="1" stop-color="#4fb0e6"/></linearGradient></defs><path d="M1 3.5 Q1 1 3.5 1 H12 L14.5 3 H26.5 Q29 3 29 5.5 V22.5 Q29 25 26.5 25 H3.5 Q1 25 1 22.5Z" fill="#3aa5e0"/><path d="M1 9.5 Q1 7 3.5 7 H26.5 Q29 7 29 9.5 V22.5 Q29 25 26.5 25 H3.5 Q1 25 1 22.5Z" fill="url(#fg11)"/></svg></div>
<div class="sbt" style="left:147px;top:1367px">context</div>
<div class="abs" style="left:76px;top:1416px"><svg width="14" height="20" viewBox="0 0 14 20"><path d="M3 2.5 L10.5 10 L3 17.5" fill="none" stroke="#8f8f8f" stroke-width="3" stroke-linecap="round" stroke-linejoin="round"/></svg></div>
<div class="abs" style="left:105px;top:1415px"><svg width="30" height="26" viewBox="0 0 30 26"><defs><linearGradient id="fg12" x1="0" y1="0" x2="0" y2="1"><stop offset="0" stop-color="#85d2f8"/><stop offset="1" stop-color="#4fb0e6"/></linearGradient></defs><path d="M1 3.5 Q1 1 3.5 1 H12 L14.5 3 H26.5 Q29 3 29 5.5 V22.5 Q29 25 26.5 25 H3.5 Q1 25 1 22.5Z" fill="#3aa5e0"/><path d="M1 9.5 Q1 7 3.5 7 H26.5 Q29 7 29 9.5 V22.5 Q29 25 26.5 25 H3.5 Q1 25 1 22.5Z" fill="url(#fg12)"/></svg></div>
<div class="sbt" style="left:147px;top:1407px">jet</div>
<div class="abs" style="left:76px;top:1456px"><svg width="14" height="20" viewBox="0 0 14 20"><path d="M3 2.5 L10.5 10 L3 17.5" fill="none" stroke="#8f8f8f" stroke-width="3" stroke-linecap="round" stroke-linejoin="round"/></svg></div>
<div class="abs" style="left:105px;top:1455px"><svg width="30" height="26" viewBox="0 0 30 26"><defs><linearGradient id="fg13" x1="0" y1="0" x2="0" y2="1"><stop offset="0" stop-color="#85d2f8"/><stop offset="1" stop-color="#4fb0e6"/></linearGradient></defs><path d="M1 3.5 Q1 1 3.5 1 H12 L14.5 3 H26.5 Q29 3 29 5.5 V22.5 Q29 25 26.5 25 H3.5 Q1 25 1 22.5Z" fill="#3aa5e0"/><path d="M1 9.5 Q1 7 3.5 7 H26.5 Q29 7 29 9.5 V22.5 Q29 25 26.5 25 H3.5 Q1 25 1 22.5Z" fill="url(#fg13)"/></svg></div>
<div class="sbt" style="left:147px;top:1447px">sf-symbols</div>
<div class="abs" style="left:76px;top:1496px"><svg width="14" height="20" viewBox="0 0 14 20"><path d="M3 2.5 L10.5 10 L3 17.5" fill="none" stroke="#8f8f8f" stroke-width="3" stroke-linecap="round" stroke-linejoin="round"/></svg></div>
<div class="abs" style="left:105px;top:1495px"><svg width="30" height="26" viewBox="0 0 30 26"><defs><linearGradient id="fg14" x1="0" y1="0" x2="0" y2="1"><stop offset="0" stop-color="#85d2f8"/><stop offset="1" stop-color="#4fb0e6"/></linearGradient></defs><path d="M1 3.5 Q1 1 3.5 1 H12 L14.5 3 H26.5 Q29 3 29 5.5 V22.5 Q29 25 26.5 25 H3.5 Q1 25 1 22.5Z" fill="#3aa5e0"/><path d="M1 9.5 Q1 7 3.5 7 H26.5 Q29 7 29 9.5 V22.5 Q29 25 26.5 25 H3.5 Q1 25 1 22.5Z" fill="url(#fg14)"/></svg></div>
<div class="sbt" style="left:147px;top:1487px">stores</div>
<div class="abs" style="left:76px;top:1536px"><svg width="14" height="20" viewBox="0 0 14 20"><path d="M3 2.5 L10.5 10 L3 17.5" fill="none" stroke="#8f8f8f" stroke-width="3" stroke-linecap="round" stroke-linejoin="round"/></svg></div>
<div class="abs" style="left:105px;top:1535px"><svg width="30" height="26" viewBox="0 0 30 26"><defs><linearGradient id="fg15" x1="0" y1="0" x2="0" y2="1"><stop offset="0" stop-color="#85d2f8"/><stop offset="1" stop-color="#4fb0e6"/></linearGradient></defs><path d="M1 3.5 Q1 1 3.5 1 H12 L14.5 3 H26.5 Q29 3 29 5.5 V22.5 Q29 25 26.5 25 H3.5 Q1 25 1 22.5Z" fill="#3aa5e0"/><path d="M1 9.5 Q1 7 3.5 7 H26.5 Q29 7 29 9.5 V22.5 Q29 25 26.5 25 H3.5 Q1 25 1 22.5Z" fill="url(#fg15)"/></svg></div>
<div class="sbt" style="left:147px;top:1527px">utils</div>
<div class="abs" style="left:45px;top:1576px"><svg width="14" height="20" viewBox="0 0 14 20"><path d="M3 2.5 L10.5 10 L3 17.5" fill="none" stroke="#8f8f8f" stroke-width="3" stroke-linecap="round" stroke-linejoin="round"/></svg></div>
<div class="abs" style="left:75px;top:1575px"><svg width="30" height="26" viewBox="0 0 30 26"><defs><linearGradient id="fg16" x1="0" y1="0" x2="0" y2="1"><stop offset="0" stop-color="#85d2f8"/><stop offset="1" stop-color="#4fb0e6"/></linearGradient></defs><path d="M1 3.5 Q1 1 3.5 1 H12 L14.5 3 H26.5 Q29 3 29 5.5 V22.5 Q29 25 26.5 25 H3.5 Q1 25 1 22.5Z" fill="#3aa5e0"/><path d="M1 9.5 Q1 7 3.5 7 H26.5 Q29 7 29 9.5 V22.5 Q29 25 26.5 25 H3.5 Q1 25 1 22.5Z" fill="url(#fg16)"/></svg></div>
<div class="sbt" style="left:116px;top:1567px">stores</div>
<div class="abs" style="left:45px;top:1616px"><svg width="14" height="20" viewBox="0 0 14 20"><path d="M3 2.5 L10.5 10 L3 17.5" fill="none" stroke="#8f8f8f" stroke-width="3" stroke-linecap="round" stroke-linejoin="round"/></svg></div>
<div class="abs" style="left:75px;top:1615px"><svg width="30" height="26" viewBox="0 0 30 26"><defs><linearGradient id="fg17" x1="0" y1="0" x2="0" y2="1"><stop offset="0" stop-color="#85d2f8"/><stop offset="1" stop-color="#4fb0e6"/></linearGradient></defs><path d="M1 3.5 Q1 1 3.5 1 H12 L14.5 3 H26.5 Q29 3 29 5.5 V22.5 Q29 25 26.5 25 H3.5 Q1 25 1 22.5Z" fill="#3aa5e0"/><path d="M1 9.5 Q1 7 3.5 7 H26.5 Q29 7 29 9.5 V22.5 Q29 25 26.5 25 H3.5 Q1 25 1 22.5Z" fill="url(#fg17)"/></svg></div>
<div class="sbt" style="left:116px;top:1607px">us</div>
<div class="abs" style="left:45px;top:1656px"><svg width="14" height="20" viewBox="0 0 14 20"><path d="M3 2.5 L10.5 10 L3 17.5" fill="none" stroke="#8f8f8f" stroke-width="3" stroke-linecap="round" stroke-linejoin="round"/></svg></div>
<div class="abs" style="left:75px;top:1655px"><svg width="30" height="26" viewBox="0 0 30 26"><defs><linearGradient id="fg18" x1="0" y1="0" x2="0" y2="1"><stop offset="0" stop-color="#85d2f8"/><stop offset="1" stop-color="#4fb0e6"/></linearGradient></defs><path d="M1 3.5 Q1 1 3.5 1 H12 L14.5 3 H26.5 Q29 3 29 5.5 V22.5 Q29 25 26.5 25 H3.5 Q1 25 1 22.5Z" fill="#3aa5e0"/><path d="M1 9.5 Q1 7 3.5 7 H26.5 Q29 7 29 9.5 V22.5 Q29 25 26.5 25 H3.5 Q1 25 1 22.5Z" fill="url(#fg18)"/></svg></div>
<div class="sbt" style="left:116px;top:1647px">utils</div>
<div class="abs" style="left:338px;top:94px;width:28px;height:28px;border-radius:50%;background:#121212"></div>
<div class="abs" style="left:338px;top:94px"><svg width="28" height="28" viewBox="0 0 28 28"><path d="M8.4 8.4 L19.6 19.6 M19.6 8.4 L8.4 19.6" stroke="#6d6c71" stroke-width="3.2"/></svg></div>
<div class="abs" style="left:0;top:1691px;width:403px;height:2px;background:#5e5e5e"></div>
<div class="abs" style="left:15px;top:1699px"><svg width="14" height="20" viewBox="0 0 14 20"><path d="M3 2.5 L10.5 10 L3 17.5" fill="none" stroke="#8f8f8f" stroke-width="3" stroke-linecap="round" stroke-linejoin="round"/></svg></div>
<div class="hd" style="left:44px;top:1693px">Currently Open Documents</div>
<div class="abs" style="left:372px;top:1701px"><svg width="20" height="14" viewBox="0 0 20 14"><path d="M3 3.5 L10 10 L17 3.5" fill="none" stroke="#e0e0e0" stroke-width="2.6" stroke-linecap="round" stroke-linejoin="round"/></svg></div>
<div class="abs" style="left:0;top:1723px;width:403px;height:2px;background:#5e5e5e"></div>
<div class="abs" style="left:10px;top:1733px"><svg width="20" height="14" viewBox="0 0 20 14"><path d="M2.5 3 L10 10.5 L17.5 3" fill="none" stroke="#8f8f8f" stroke-width="3" stroke-linecap="round" stroke-linejoin="round"/></svg></div>
<div class="hd" style="left:44px;top:1725px">Worksheets &amp; Scratchpad</div>
<div class="abs" style="left:0;top:1755px;width:403px;height:2px;background:#5e5e5e"></div>
<div class="abs" style="left:48px;top:1761px"><svg width="24" height="30" viewBox="0 0 24 30"><path d="M3 1 H15.6 L23 8.4 V27 Q23 29 21 29 H3 Q1 29 1 27 V3 Q1 1 3 1Z" fill="#f6f6f6" stroke="#0c0c0c" stroke-width="0.7"/><path d="M15.6 1.3 L22.7 8.4 H17 Q15.6 8.4 15.6 7Z" fill="#ffffff"/><g fill="#a9a9a9"><rect x="4" y="4.2" width="10" height="3.4"/></g><g fill="#bababa"><rect x="4" y="9" width="10" height="0.9"/><rect x="4" y="10.8" width="15.5" height="2"/><rect x="4" y="13.4" width="15.5" height="2.2"/><rect x="4" y="17" width="15.5" height="2.3"/><rect x="4" y="21.2" width="15" height="2.2"/><rect x="4" y="24" width="14" height="2.4"/></g></svg></div>
<div class="sbt" style="left:86px;top:1755px">Scratchpad</div>
<div class="abs" style="left:48px;top:1801px"><svg width="24" height="30" viewBox="0 0 24 30"><path d="M1 1 H15.6 L23 8.4 V29 H1Z" fill="#f4f4f4" stroke="#0c0c0c" stroke-width="0.7"/><path d="M15.6 1.3 L22.7 8.4 H15.6Z" fill="#e6e6e6"/><rect x="4.4" y="9.4" width="15.2" height="14.6" rx="5" fill="#dcdaf6" stroke="#8a86d6" stroke-width="1.8"/><text x="12" y="20.3" text-anchor="middle" font-family="Liberation Serif" font-size="10.5" font-weight="bold" fill="#14126a">B</text></svg></div>
<div class="sbt" style="left:86px;top:1795px">Unix Worksheet</div>
<div class="abs" style="left:48px;top:1841px"><svg width="24" height="30" viewBox="0 0 24 30"><path d="M1 1 H15.6 L23 8.4 V29 H1Z" fill="#f4f4f4" stroke="#0c0c0c" stroke-width="0.7"/><path d="M15.6 1.3 L22.7 8.4 H15.6Z" fill="#e6e6e6"/><rect x="4.4" y="9.4" width="15.2" height="14.6" rx="5" fill="#dcdaf6" stroke="#8a86d6" stroke-width="1.8"/><text x="12" y="20.3" text-anchor="middle" font-family="Liberation Serif" font-size="10.5" font-weight="bold" fill="#14126a">B</text></svg></div>
<div class="sbt" style="left:86px;top:1835px">Chat Worksheet</div>
<div class="abs" style="left:403px;top:57px;width:2px;height:1853px;background:#727272"></div>
<div class="abs" style="left:405px;top:89px;width:138px;height:1788px;background:#1f1f1f"></div>
<div class="abs" style="left:543px;top:89px;width:2px;height:1788px;background:#6c6c6c"></div>
<div class="abs" style="left:545px;top:89px;width:1970px;height:1788px;background:#131313"></div>
<div class="abs" style="left:2515px;top:89px;width:21px;height:1788px;background:#1e1e1e;border-left:2px solid #262626"></div>
<div class="abs" style="left:2536px;top:89px;width:30px;height:1788px;background:#202020;border-left:1px solid #2f2f2f"></div>
<div class="abs" style="left:2536px;top:90px;width:30px;height:12px;background:#7f7f7f"></div>
<div class="abs" style="left:2544px;top:108px;width:16px;height:546px;border-radius:8px;background:#959595"></div>
<div class="abs" style="left:405px;top:1342.0px;width:138px;height:46px;background:#333333"></div>
<div class="abs" style="left:554px;top:1342.0px;width:1982px;height:46px;background:#313540;border-left:1px solid #2b2e37"></div>
<div class="abs" style="left:555px;top:1343.0px;width:1980px;height:3px;background:#464a57"></div>
<div class="abs" style="left:555px;top:1384.0px;width:1980px;height:3px;background:#464a57"></div>
<div class="cl" style="top:103.70px"><span style="color:#6098e6">&lt;</span><span class="u" style="color:#6098e6">script</span><span style="color:#adadad"> </span><span style="color:#85b8fa">lang=</span><span style="color:#98dafb">"ts"</span><span style="color:#adadad"> </span><span style="color:#85b8fa">context=</span><span style="color:#98dafb">"module"</span><span style="color:#6098e6">&gt;</span></div>
<div class="ln" style="top:103.70px;color:#8c8c8c">1</div>
<div class="abs" style="left:518px;top:120.0px;width:0;height:0;border-left:8px solid transparent;border-right:8px solid transparent;border-top:9px solid #8c8c8c"></div>
<div class="cl" style="top:149.70px"><span style="color:#adadad">    </span><span style="color:#6098e6">import</span><span style="color:#adadad"> type { Artwork </span><span style="color:#168dac">as</span><span style="color:#adadad"> JetArtworkType } from </span><span style="color:#98dafb">'@jet<span class="hy">-</span>app/app<span class="hy">-</span>store/api/models'</span><span style="color:#adadad">;</span></div>
<div class="ln" style="top:149.70px;color:#8c8c8c">2</div>
<div class="cl" style="top:195.70px"><span style="color:#adadad">    </span><span style="color:#6098e6">import</span><span style="color:#adadad"> type {</span></div>
<div class="ln" style="top:195.70px;color:#8c8c8c">3</div>
<div class="abs" style="left:518px;top:212.0px;width:0;height:0;border-left:8px solid transparent;border-right:8px solid transparent;border-top:9px solid #8c8c8c"></div>
<div class="cl" style="top:241.70px"><span style="color:#adadad">        Artwork </span><span style="color:#168dac">as</span><span style="color:#adadad"> ComponentArtworkType,</span></div>
<div class="ln" style="top:241.70px;color:#8c8c8c">4</div>
<div class="cl" style="top:287.70px"><span style="color:#adadad">        Profile </span><span style="color:#168dac">as</span><span style="color:#adadad"> ArtworkProfile,</span></div>
<div class="ln" style="top:287.70px;color:#8c8c8c">5</div>
<div class="cl" style="top:333.70px"><span style="color:#adadad">        CropCode,</span></div>
<div class="ln" style="top:333.70px;color:#8c8c8c">6</div>
<div class="cl" style="top:379.70px"><span style="color:#adadad">        ImageSizes,</span></div>
<div class="ln" style="top:379.70px;color:#8c8c8c">7</div>
<div class="cl" style="top:425.70px"><span style="color:#adadad">    } from </span><span style="color:#98dafb">'@amp/web<span class="hy">-</span>app<span class="hy">-</span>components/src/components/Artwork/types'</span><span style="color:#adadad">;</span></div>
<div class="ln" style="top:425.70px;color:#8c8c8c">8</div>
<div class="abs" style="left:521px;top:442.0px;width:4px;height:8px;background:#8c8c8c"></div>
<div class="abs" style="left:521px;top:446.0px;width:13px;height:4px;background:#8c8c8c"></div>
<div class="ln" style="top:471.70px;color:#8c8c8c">9</div>
<div class="cl" style="top:517.70px"><span style="color:#adadad">    </span><span style="color:#6098e6">import</span><span style="color:#adadad"> type { NamedProfile } from </span><span style="color:#98dafb">'~/config/components/artwork'</span><span style="color:#adadad">;</span></div>
<div class="ln" style="top:517.70px;color:#8c8c8c">10</div>
<div class="ln" style="top:563.70px;color:#8c8c8c">11</div>
<div class="cl" style="top:609.70px"><span style="color:#6c78b8">    /<span class="ast">*</span><span class="ast">*</span></span></div>
<div class="ln" style="top:609.70px;color:#8c8c8c">12</div>
<div class="abs" style="left:518px;top:626.0px;width:0;height:0;border-left:8px solid transparent;border-right:8px solid transparent;border-top:9px solid #8c8c8c"></div>
<div class="cl" style="top:655.70px"><span style="color:#6c78b8">     <span class="ast">*</span> Creates a {@linkcode Profile} on<span class="hy">-</span>the<span class="hy">-</span>fly based on the properties of</span></div>
<div class="ln" style="top:655.70px;color:#8c8c8c">13</div>
<div class="cl" style="top:701.70px"><span style="color:#6c78b8">     <span class="ast">*</span> the {@linkcode artwork}</span></div>
<div class="ln" style="top:701.70px;color:#8c8c8c">14</div>
<div class="cl" style="top:747.70px"><span style="color:#6c78b8">     <span class="ast">*</span>/</span></div>
<div class="ln" style="top:747.70px;color:#8c8c8c">15</div>
<div class="abs" style="left:521px;top:764.0px;width:4px;height:8px;background:#8c8c8c"></div>
<div class="abs" style="left:521px;top:768.0px;width:13px;height:4px;background:#8c8c8c"></div>
<div class="cl" style="top:793.70px"><span style="color:#adadad">    </span><span style="color:#6098e6">export</span><span style="color:#adadad"> </span><span style="color:#6098e6">function</span><span style="color:#adadad"> getNaturalProfile(</span></div>
<div class="ln" style="top:793.70px;color:#8c8c8c">16</div>
<div class="abs" style="left:518px;top:810.0px;width:0;height:0;border-left:8px solid transparent;border-right:8px solid transparent;border-top:9px solid #8c8c8c"></div>
<div class="cl" style="top:839.70px"><span style="color:#adadad">        artwork: JetArtworkType,</span></div>
<div class="ln" style="top:839.70px;color:#8c8c8c">17</div>
<div class="cl" style="top:885.70px"><span style="color:#adadad">        imageSizes: ImageSizes = [artwork.width],</span></div>
<div class="ln" style="top:885.70px;color:#8c8c8c">18</div>
<div class="cl" style="top:931.70px"><span style="color:#adadad">    ): ArtworkProfile {</span></div>
<div class="ln" style="top:931.70px;color:#8c8c8c">19</div>
<div class="abs" style="left:521px;top:948.0px;width:4px;height:8px;background:#8c8c8c"></div>
<div class="abs" style="left:521px;top:952.0px;width:13px;height:4px;background:#8c8c8c"></div>
<div class="cl" style="top:977.70px"><span style="color:#adadad">        </span><span style="color:#6098e6">const</span><span style="color:#adadad"> aspectRatio = artwork.width / artwork.height;</span></div>
<div class="ln" style="top:977.70px;color:#8c8c8c">20</div>
<div class="ln" style="top:1023.70px;color:#8c8c8c">21</div>
<div class="cl" style="top:1069.70px"><span style="color:#adadad">        </span><span style="color:#6098e6">return</span><span style="color:#adadad"> [imageSizes, aspectRatio, artwork.crop </span><span style="color:#168dac">as</span><span style="color:#adadad"> CropCode];</span></div>
<div class="ln" style="top:1069.70px;color:#8c8c8c">22</div>
<div class="cl" style="top:1115.70px"><span style="color:#adadad">    }</span></div>
<div class="ln" style="top:1115.70px;color:#8c8c8c">23</div>
<div class="ln" style="top:1161.70px;color:#8c8c8c">24</div>
<div class="cl" style="top:1207.70px"><span style="color:#adadad">    </span><span style="color:#6098e6">export</span><span style="color:#adadad"> type Profile = NamedProfile | ArtworkProfile;</span></div>
<div class="ln" style="top:1207.70px;color:#8c8c8c">25</div>
<div class="cl" style="top:1253.70px"><span style="color:#6098e6">&lt;/</span><span class="u" style="color:#6098e6">script</span><span style="color:#6098e6">&gt;</span></div>
<div class="ln" style="top:1253.70px;color:#8c8c8c">26</div>
<div class="abs" style="left:521px;top:1270.0px;width:4px;height:8px;background:#8c8c8c"></div>
<div class="abs" style="left:521px;top:1274.0px;width:13px;height:4px;background:#8c8c8c"></div>
<div class="ln" style="top:1299.70px;color:#8c8c8c">27</div>
<div class="cl" style="top:1345.70px"><span style="color:#6098e6">&lt;</span><span class="u" style="color:#6098e6">script</span><span style="color:#adadad"> </span><span style="color:#85b8fa">lang=</span><span style="color:#98dafb">"ts"</span><span style="color:#6098e6">&gt;</span></div>
<div class="ln" style="top:1345.70px;color:#b4b4b4">28</div>
<div class="abs" style="left:518px;top:1362.0px;width:0;height:0;border-left:8px solid transparent;border-right:8px solid transparent;border-top:9px solid #8c8c8c"></div>
<div class="cl" style="top:1391.70px"><span style="color:#adadad">    </span><span style="color:#6098e6">import</span><span style="color:#adadad"> type { ImageSettings } from</span></div>
<div class="ln" style="top:1391.70px;color:#8c8c8c">29</div>
<div class="cl" style="top:1437.70px"><span style="color:#98dafb">'@amp/web<span class="hy">-</span>app<span class="hy">-</span>components/src/components/Artwork/types'</span><span style="color:#adadad">;</span></div>
<div class="abs" style="left:480px;top:1464.0px;width:18px;height:6px;display:flex;gap:2px"><div style="width:5px;height:6px;background:#8c8c8c"></div><div style="width:5px;height:6px;background:#8c8c8c"></div><div style="width:5px;height:6px;background:#8c8c8c"></div></div>
<div class="cl" style="top:1483.70px"><span style="color:#adadad">    </span><span style="color:#6098e6">import</span><span style="color:#adadad"> Artwork from </span><span style="color:#98dafb">'@amp/web<span class="hy">-</span>app<span class="hy">-</span>components/src/components/Artwork/Artwork.svelte'</span><span style="color:#adadad">;</span></div>
<div class="ln" style="top:1483.70px;color:#8c8c8c">30</div>
<div class="cl" style="top:1529.70px"><span style="color:#adadad">    </span><span style="color:#6098e6">import</span><span style="color:#adadad"> { colorAsString, isNamedColor } from </span><span style="color:#98dafb">'~/utils/color'</span><span style="color:#adadad">;</span></div>
<div class="ln" style="top:1529.70px;color:#8c8c8c">31</div>
<div class="ln" style="top:1575.70px;color:#8c8c8c">32</div>
<div class="cl" style="top:1621.70px"><span style="color:#adadad">    </span><span style="color:#6098e6">import</span><span style="color:#adadad"> {</span></div>
<div class="ln" style="top:1621.70px;color:#8c8c8c">33</div>
<div class="abs" style="left:518px;top:1638.0px;width:0;height:0;border-left:8px solid transparent;border-right:8px solid transparent;border-top:9px solid #8c8c8c"></div>
<div class="cl" style="top:1667.70px"><span style="color:#adadad">        ArtworkConfig,</span></div>
<div class="ln" style="top:1667.70px;color:#8c8c8c">34</div>
<div class="cl" style="top:1713.70px"><span style="color:#adadad">        type ArtworkProfileMap,</span></div>
<div class="ln" style="top:1713.70px;color:#8c8c8c">35</div>
<div class="cl" style="top:1759.70px"><span style="color:#adadad">    } from </span><span style="color:#98dafb">'@amp/web<span class="hy">-</span>app<span class="hy">-</span>components/config/components/artwork'</span><span style="color:#adadad">;</span></div>
<div class="ln" style="top:1759.70px;color:#8c8c8c">36</div>
<div class="abs" style="left:521px;top:1776.0px;width:4px;height:8px;background:#8c8c8c"></div>
<div class="abs" style="left:521px;top:1780.0px;width:13px;height:4px;background:#8c8c8c"></div>
<div class="ln" style="top:1805.70px;color:#8c8c8c">37</div>
<div class="abs" style="left:0;top:1877px;width:2566px;height:2px;background:#6b6b6b"></div>
<div class="abs" style="left:0;top:1879px;width:2566px;height:31px;background:#131313"></div>
<div class="abs" style="left:403px;top:1877px;width:2px;height:33px;background:#727272"></div>
<div class="abs" style="left:0;top:1879px"><svg width="403" height="31" viewBox="0 0 403 31">
<path d="M25.5 9 V22 M19 15.5 H32" stroke="#5a5a5a" stroke-width="3"/>
<path d="M39 14 L46 14 L42.5 18Z" fill="#5a5a5a"/>
<circle cx="88" cy="16" r="8.5" fill="none" stroke="#8a8a8a" stroke-width="2"/><path d="M88 10 V16.5 L92 20" fill="none" stroke="#8a8a8a" stroke-width="2"/>
<path d="M104 14 L112 14 L108 18Z" fill="#8a8a8a"/>
<circle cx="150" cy="14" r="5.5" fill="none" stroke="#8a8a8a" stroke-width="2.5"/><path d="M154 18 L159 23" stroke="#8a8a8a" stroke-width="3"/>
<path d="M163 14 L170 14 L166.5 18Z" fill="#8a8a8a"/>
<path d="M207.5 19.5 Q203.5 19.5 203.5 15.5 Q203.5 11.5 207.5 11.8 Q208.5 6.5 213.5 6.5 Q218.5 6.5 219.3 11 Q223 11.3 223 15.3 Q223 19.5 219 19.5Z" fill="#8a8a8a"/>
<path d="M205.5 25.5 L208 20.5 M210.5 25.5 L213 20.5 M215.5 25.5 L218 20.5" stroke="#8a8a8a" stroke-width="1.6"/>
<path d="M226 14 L234 14 L230 18Z" fill="#8a8a8a"/>
<rect x="264" y="4.5" width="32" height="20" fill="#8f8f8f"/><rect x="282" y="7.5" width="10" height="14" fill="#131313"/>
<path d="M381 6 V27 M386 5 V26 M391 6 V27 M396 7 V28" stroke="#8f8f8f" stroke-width="2"/>
</svg></div>
<div class="st" style="left:461px">L: 28 C: 4</div>
<div class="st" style="left:629px">Svelte</div>
<div class="abs" style="left:705px;top:1886px"><svg width="12" height="18" viewBox="0 0 12 18"><path d="M2 6.5 L6 2.5 L10 6.5 M2 11.5 L6 15.5 L10 11.5" fill="none" stroke="#a0a0a0" stroke-width="2" stroke-linecap="round" stroke-linejoin="round"/></svg></div>
<div class="st" style="left:748px">Unicode (UTF-8)</div>
<div class="abs" style="left:938px;top:1886px"><svg width="12" height="18" viewBox="0 0 12 18"><path d="M2 6.5 L6 2.5 L10 6.5 M2 11.5 L6 15.5 L10 11.5" fill="none" stroke="#a0a0a0" stroke-width="2" stroke-linecap="round" stroke-linejoin="round"/></svg></div>
<div class="st" style="left:980px">Unix (LF)</div>
<div class="abs" style="left:1086px;top:1886px"><svg width="12" height="18" viewBox="0 0 12 18"><path d="M2 6.5 L6 2.5 L10 6.5 M2 11.5 L6 15.5 L10 11.5" fill="none" stroke="#a0a0a0" stroke-width="2" stroke-linecap="round" stroke-linejoin="round"/></svg></div>
<div class="abs" style="left:1132px;top:1878px"><svg width="30" height="32" viewBox="0 0 30 32"><rect x="3" y="14" width="16" height="14" rx="2.2" fill="#a8a8a8"/><path d="M16 14 V9.5 Q16 5 20.5 5 Q25 5 25 9.5 V14" fill="none" stroke="#a8a8a8" stroke-width="2.2" stroke-linecap="round"/></svg></div>
<div class="st" style="left:1186px;font-size:24.2px">Saved: 03.11.25, 19:03:30</div>
<div class="abs" style="left:1495px;top:1884px"><svg width="22" height="26" viewBox="0 0 22 26"><path d="M2 2 H13 L20 9 V24 H2Z" fill="none" stroke="#2a2a2a" stroke-width="2"/></svg></div>
<div class="st" style="left:1524px;font-size:24.6px">3.839 / 338 / 119</div>
<div class="abs" style="left:1742px;top:1884px"><svg width="26" height="26" viewBox="0 0 26 26"><circle cx="11" cy="11" r="8.5" fill="none" stroke="#9a9a9a" stroke-width="2.2"/><path d="M17 17 L23.5 23.5" stroke="#9a9a9a" stroke-width="2.6"/><path d="M7 9 H15 M7 13 H13" stroke="#9a9a9a" stroke-width="1.6"/></svg></div>
<div class="st" style="left:1777px">4</div>
<div class="st" style="left:1817px">100%</div>
<div class="abs" style="left:1888px;top:1886px"><svg width="12" height="18" viewBox="0 0 12 18"><path d="M2 6.5 L6 2.5 L10 6.5 M2 11.5 L6 15.5 L10 11.5" fill="none" stroke="#a0a0a0" stroke-width="2" stroke-linecap="round" stroke-linejoin="round"/></svg></div>
</div></body></html>
